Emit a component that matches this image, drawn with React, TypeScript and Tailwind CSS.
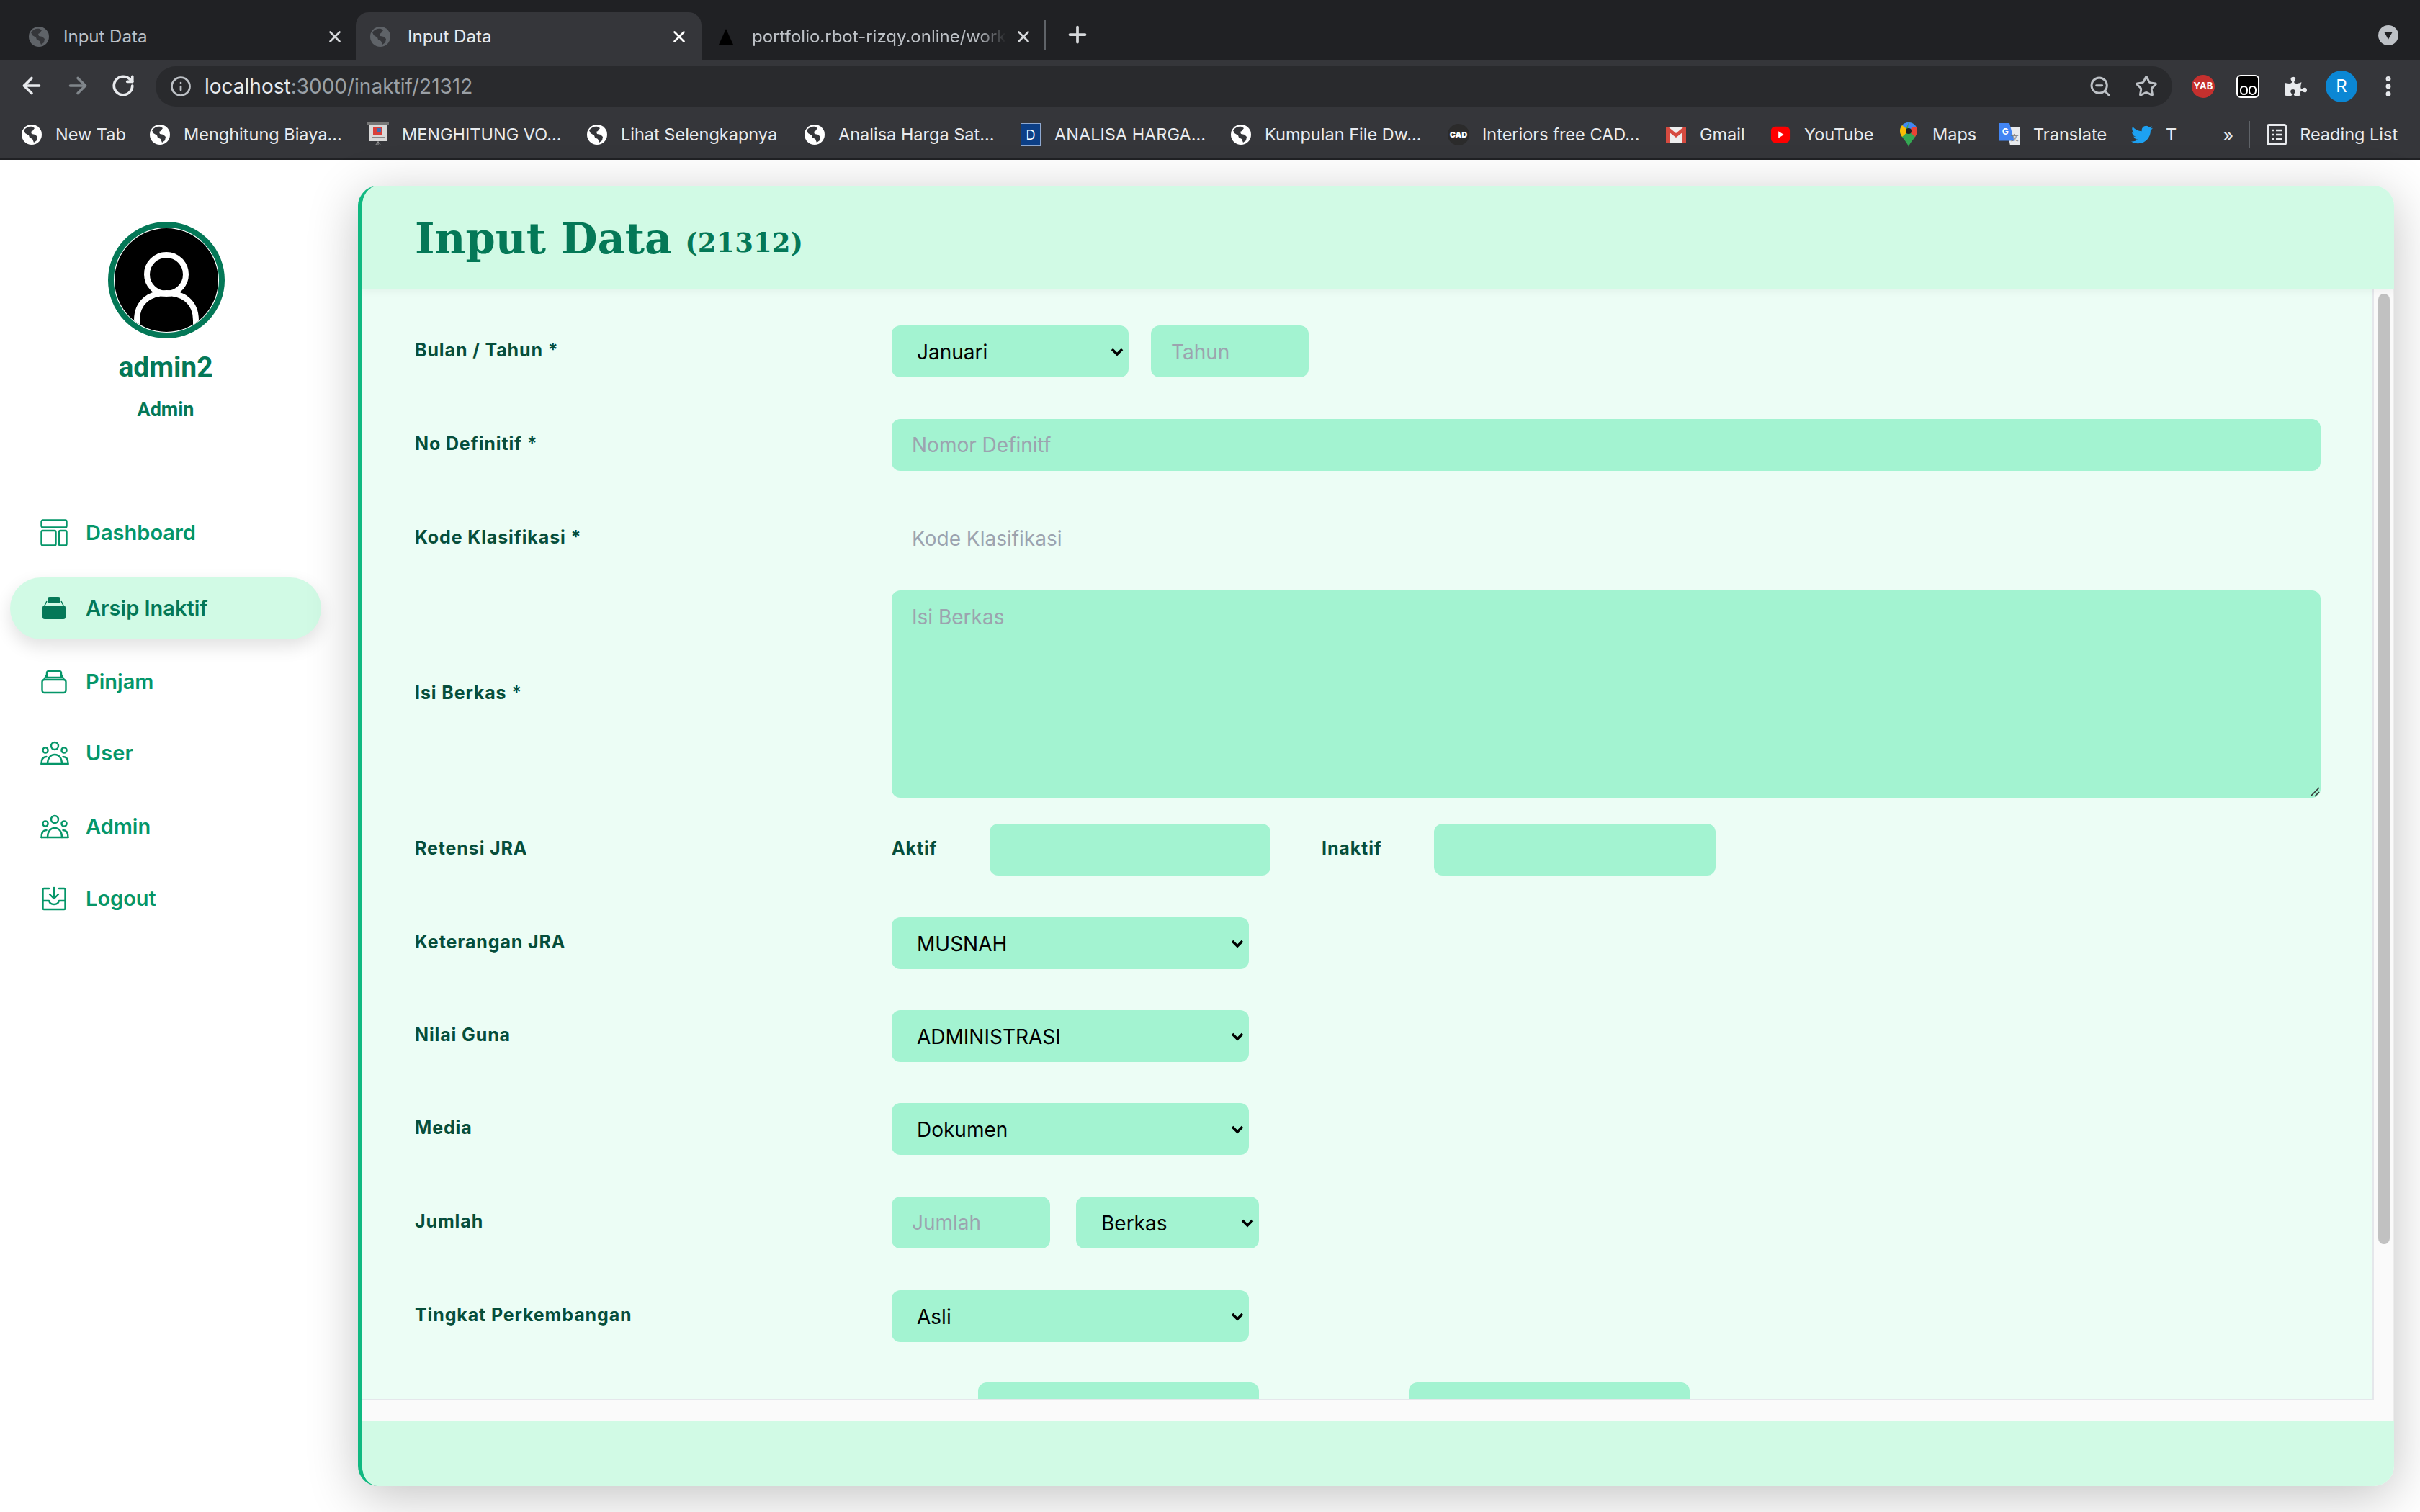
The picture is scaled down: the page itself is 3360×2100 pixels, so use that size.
import { ArrowLeft, ArrowRight, RotateCw, Info, ZoomOut, Star, MoreVertical, Plus, X } from "lucide-react";
import { FaTwitter, FaPuzzlePiece } from "react-icons/fa";
import type { ReactNode } from "react";

function Globe({ className = "text-white" }: { className?: string }) {
  return (
    <svg viewBox="0 0 28 28" className={`w-[28px] h-[28px] shrink-0 ${className}`}>
      <circle cx="14" cy="14" r="14" fill="currentColor" />
      <path d="M3 8c3-4 7-6 12-5l3 2-3 4-2 1 1 3 5 1 3 3-1 5-4 3-2-5-4-2-1-3-5-3z" fill="#35363a" />
    </svg>
  );
}

function Tab({ title, active, icon, width, textClass, textGap }: { title: string; active?: boolean; icon: ReactNode; width: string; textClass: string; textGap: string }) {
  return (
    <div className={`${width} h-[67px] flex items-center pl-[20px] rounded-t-[18px] ${active ? "bg-[#35363a]" : ""}`}>
      {icon}
      <span className={`${textGap} text-[24px] whitespace-nowrap overflow-hidden flex-1 ${textClass}`}>{title}</span>
      <X className={`w-[26px] h-[26px] shrink-0 ${active ? "text-white" : "text-[#d5d7da]"}`} strokeWidth={2.5} />
    </div>
  );
}

function Bm({ icon, label, w }: { icon: ReactNode; label: string; w: string }) {
  return (
    <div className={`flex items-center gap-[18px] shrink-0 ${w}`}>
      <span className="w-[30px] h-[30px] flex items-center justify-center shrink-0">{icon}</span>
      <span className="text-[23.5px] text-[#e8eaed] whitespace-nowrap">{label}</span>
    </div>
  );
}

function Chrome() {
  return (
    <div className="h-[222px] bg-[#35363a] border-b-2 border-[#202124] font-['Inter',sans-serif]">
      <div className="h-[84px] bg-[#202124] flex items-end relative pl-[20px]">
        <Tab width="w-[474px] pr-[16px]" textGap="ml-[20px]" title="Input Data" textClass="text-[#bdc1c6]" icon={<Globe className="text-[#5f6368]" />} />
        <Tab width="w-[480px] pr-[18px]" textGap="ml-[24px]" title="Input Data" active textClass="text-[#e8eaed]" icon={<Globe className="text-[#5f6368]" />} />
        <Tab width="w-[468px] pr-[8px]" textGap="ml-[22px] [mask-image:linear-gradient(to_right,black_86%,transparent_97%)]" title="portfolio.rbot-rizqy.online/work" textClass="text-[#bdc1c6]" icon={<svg viewBox="0 0 28 28" className="w-[28px] h-[28px]"><path d="M14 3 24 25H4z" fill="#000" /></svg>} />
        <div className="w-[2px] h-[42px] bg-[#5f6368] mb-[14px] ml-[8px]" />
        <Plus className="w-[36px] h-[36px] text-[#d5d7da] mb-[18px] ml-[26px]" strokeWidth={2.5} />
        <div className="ml-auto mr-[30px] mb-[21px] w-[28px] h-[28px] rounded-full bg-[#bdc1c6] flex items-center justify-center">
          <svg viewBox="0 0 12 12" className="w-[14px] h-[14px]"><path d="M1 2h10L6 11z" fill="#202124" /></svg>
        </div>
      </div>
      <div className="h-[64px] flex items-end">
        <div className="w-[216px] h-[56px] flex items-center pl-[26px] gap-[28px] text-[#e8eaed] pb-[2px]">
          <ArrowLeft className="w-[36px] h-[36px]" strokeWidth={2.4} />
          <ArrowRight className="w-[36px] h-[36px] text-[#80868b]" strokeWidth={2.4} />
          <RotateCw className="w-[34px] h-[34px]" strokeWidth={2.6} />
        </div>
        <div className="w-[2800px] h-[56px] rounded-full bg-[#292a2d] flex items-center pl-[20px] pr-[20px]">
          <Info className="w-[30px] h-[30px] text-[#bdc1c6]" strokeWidth={2.2} />
          <span className="ml-[18px] text-[28px] text-[#e8eaed]">localhost<span className="text-[#9aa0a6]">:3000/inaktif/21312</span></span>
          <ZoomOut className="ml-auto w-[32px] h-[32px] text-[#bdc1c6]" strokeWidth={2.2} />
          <Star className="ml-[32px] w-[32px] h-[32px] text-[#bdc1c6]" strokeWidth={2.2} />
        </div>
        <div className="flex-1 h-[56px] flex items-center pl-[27px] gap-[30px]">
          <div className="w-[32px] h-[32px] rounded-full bg-[#c5302e] flex items-center justify-center text-[13px] font-bold text-white">YAB</div>
          <div className="w-[32px] h-[32px] rounded-[6px] bg-black border-2 border-white flex items-end justify-center gap-[1px] pb-[2px]">
            <span className="w-[11px] h-[13px] rounded-full border-2 border-white" />
            <span className="w-[11px] h-[13px] rounded-full border-2 border-white" />
          </div>
          <FaPuzzlePiece className="w-[30px] h-[30px] text-[#e8eaed] ml-[6px]" />
          <div className="w-[44px] h-[44px] rounded-full bg-[#0b87d4] text-white text-[24px] flex items-center justify-center -ml-[4px]">R</div>
          <MoreVertical className="w-[36px] h-[36px] text-[#e8eaed] -ml-[5px]" strokeWidth={2.6} />
        </div>
      </div>
      <div className="h-[72px] flex items-center pl-[29px] gap-[34px] pt-[6px]">
        <Bm w="w-[144px]" icon={<Globe />} label="New Tab" />
        <Bm w="w-[269px]" icon={<Globe />} label="Menghitung Biaya..." />
        <Bm w="w-[270px]" icon={<svg viewBox="0 0 30 34" className="w-[30px] h-[34px]"><rect x="2" y="2" width="26" height="24" fill="#d9d9d9" /><rect x="0" y="0" width="30" height="3" fill="#777" /><rect x="8" y="6" width="13" height="11" fill="#d9403a" /><rect x="13" y="8" width="6" height="6" fill="#3f6fb5" /><rect x="6" y="20" width="18" height="2" fill="#888" /><path d="M15 26v6M11 32l4-5 4 5" stroke="#999" fill="none" /></svg>} label="MENGHITUNG VO..." />
        <Bm w="w-[268px]" icon={<Globe />} label="Lihat Selengkapnya" />
        <Bm w="w-[266px]" icon={<Globe />} label="Analisa Harga Sat..." />
        <Bm w="w-[258px]" icon={<div className="w-[28px] h-[32px] bg-[#0c3f86] border border-[#8fa9d0] text-white text-[18px] flex items-center justify-center">D</div>} label="ANALISA HARGA..." />
        <Bm w="w-[268px]" icon={<Globe />} label="Kumpulan File Dw..." />
        <Bm w="w-[268px]" icon={<div className="w-[30px] h-[30px] rounded-full bg-[#2b2b2b] text-white text-[11px] font-black flex items-center justify-center">CAD</div>} label="Interiors free CAD..." />
        <Bm w="w-[111px]" icon={<svg viewBox="0 0 30 30" className="w-[30px] h-[30px]"><rect x="1" y="4" width="28" height="22" fill="#eee" /><path d="M1 4v22h5V12l9 7 9-7v14h5V4h-3L15 13 4 4z" fill="#d64b40" /></svg>} label="Gmail" />
        <Bm w="w-[144px]" icon={<svg viewBox="0 0 30 30" className="w-[28px] h-[28px]"><rect x="1" y="3" width="28" height="24" rx="6" fill="#f00" /><path d="M12 10l8 5-8 5z" fill="#fff" /></svg>} label="YouTube" />
        <Bm w="w-[106px]" icon={<svg viewBox="0 0 24 34" className="w-[24px] h-[34px]"><path d="M12 0C5 0 0 5 0 12c0 8 9 13 12 22 3-9 12-14 12-22C24 5 19 0 12 0z" fill="#34a853" /><path d="M12 0C8 0 5 2 3 4l5 6 4-10z" fill="#4285f4" /><path d="M12 0l-1 8 6 4 6-5c-2-4-6-7-11-7z" fill="#4285f4" /><path d="M0 12c0 3 1 5 3 8l9-8-4-4-5-4C1 6 0 9 0 12z" fill="#fbbc04" /><path d="M17 7l6-1c1 2 1 4 1 6 0 2-1 5-3 8l-9-8z" fill="#ea4335" /><circle cx="12" cy="12" r="4" fill="#202124" /></svg>} label="Maps" />
        <Bm w="w-[150px]" icon={<svg viewBox="0 0 32 34" className="w-[32px] h-[34px]"><path d="M12 6h19v27H17z" fill="#e8eaed" /><path d="M1 0h15l7 26H1z" fill="#4285f4" /><text x="5" y="17" fontSize="13" fontWeight="700" fill="#fff" fontFamily="Inter">G</text><text x="18" y="26" fontSize="12" fill="#777" fontFamily="Inter">文</text></svg>} label="Translate" />
        <Bm w="w-[60px]" icon={<FaTwitter className="w-[30px] h-[30px] text-[#1da1f2]" />} label="T" />
        <span className="text-[26px] text-[#e8eaed] ml-[33px] -mr-[13px]">»</span>
        <div className="w-[2px] h-[38px] bg-[#5f6368]" />
        <div className="flex items-center gap-[18px] -ml-[11px]">
          <svg viewBox="0 0 28 30" className="w-[28px] h-[30px]"><rect x="1.5" y="1.5" width="25" height="27" rx="2" fill="none" stroke="#e8eaed" strokeWidth="3" /><path d="M7 9h3M13 9h8M7 15h3M13 15h8M7 21h3M13 21h8" stroke="#e8eaed" strokeWidth="2.5" /></svg>
          <span className="text-[23.5px] text-[#e8eaed] whitespace-nowrap">Reading List</span>
        </div>
      </div>
    </div>
  );
}

const S = { fill: "none", stroke: "currentColor", strokeWidth: 2.4, strokeLinecap: "round" as const, strokeLinejoin: "round" as const };

function DashIcon() {
  return (
    <svg viewBox="0 0 38 38" className="w-[38px] h-[38px]" {...S}>
      <rect x="1.5" y="1.5" width="35" height="10" rx="2" />
      <rect x="1.5" y="16" width="20" height="20.5" rx="2" />
      <rect x="26" y="16" width="10.5" height="20.5" rx="2" />
    </svg>
  );
}
function BoxIcon({ solid }: { solid?: boolean }) {
  if (solid)
    return (
      <svg viewBox="0 0 38 38" className="w-[38px] h-[38px]">
        <path d="M10 6c0-2 1-3 3-3h12c2 0 3 1 3 3v6H10z" fill="currentColor" />
        <path d="M9 9l-4 8M29 9l4 8" stroke="currentColor" strokeWidth="1.5" fill="none" />
        <rect x="3" y="15" width="32" height="19" rx="3" fill="currentColor" />
      </svg>
    );
  return (
    <svg viewBox="0 0 38 38" className="w-[38px] h-[38px]" {...S}>
      <path d="M9 13V7c0-2 1-3 3-3h14c2 0 3 1 3 3v6" />
      <path d="M9 9l-4 7M29 9l4 7M7 13h24" />
      <rect x="2.5" y="16" width="33" height="18" rx="3" />
    </svg>
  );
}
function UsersIcon() {
  return (
    <svg viewBox="0 0 40 34" className="w-[40px] h-[34px]" {...S}>
      <circle cx="20" cy="7" r="5" />
      <circle cx="7" cy="13" r="3.6" />
      <circle cx="33" cy="13" r="3.6" />
      <path d="M10 32c0-8 4-13 10-13s10 5 10 13" />
      <path d="M1.5 32c0-6 2-10 7-10M38.5 32c0-6-2-10-7-10" />
      <path d="M1.5 32h37" />
    </svg>
  );
}
function LogoutIcon() {
  return (
    <svg viewBox="0 0 34 34" className="w-[34px] h-[34px] ml-[2px]" {...S}>
      <path d="M10 3H3a1.500 1.500 0 0 0-1.500 1.500v26A1.500 1.500 0 0 0 3 32h28a1.500 1.500 0 0 0 1.500-1.500v-26A1.500 1.500 0 0 0 31 3h-7" />
      <path d="M17 2v14M11 11l6 6 6-6" />
      <path d="M2 20h8c1 4 4 5 7 5s6-1 7-5h8" />
    </svg>
  );
}

function NavItem({ icon, label, active, cls }: { icon: ReactNode; label: string; active?: boolean; cls: string }) {
  return (
    <div className={`mx-[14px] w-[432px] h-[86px] flex items-center rounded-full ${cls} ${active ? "bg-[#d1fae5] text-[#047857] shadow-[0_10px_24px_rgba(0,0,0,0.12)]" : "text-[#059669]"}`}>
      <span className="w-[105px] pl-[42px] flex items-center">{icon}</span>
      <span className="text-[29px] font-semibold">{label}</span>
    </div>
  );
}

function Sidebar() {
  return (
    <div className="w-[460px] shrink-0 flex flex-col font-['Inter',sans-serif]">
      <div className="mt-[86px] mx-auto ml-[150px] w-[162px] h-[162px] rounded-full border-[8px] border-[#047857] bg-white p-[1px] overflow-hidden">
        <svg viewBox="0 0 144 144" className="w-full h-full rounded-full bg-black">
          <circle cx="72" cy="64" r="27" fill="none" stroke="#fff" strokeWidth="8" />
          <path d="M31 146v-18c0-26 18-38 41-38s41 12 41 38v18" fill="none" stroke="#fff" strokeWidth="8" />
        </svg>
      </div>
      <div className="mt-[17px] text-center font-['Roboto',sans-serif] font-bold text-[39px] leading-[46px] text-[#047857]">admin2</div>
      <div className="mt-[20px] text-center font-['Roboto',sans-serif] font-bold text-[27px] leading-[32px] text-[#047857]">Admin</div>
      <div className="mt-[112px] flex flex-col">
        <NavItem cls="" icon={<DashIcon />} label="Dashboard" />
        <NavItem cls="mt-[19px]" active icon={<BoxIcon solid />} label="Arsip Inaktif" />
        <NavItem cls="mt-[16px]" icon={<BoxIcon />} label="Pinjam" />
        <NavItem cls="mt-[13px]" icon={<UsersIcon />} label="User" />
        <NavItem cls="mt-[16px]" icon={<UsersIcon />} label="Admin" />
        <NavItem cls="mt-[14px]" icon={<LogoutIcon />} label="Logout" />
      </div>
    </div>
  );
}

const field = "h-[72px] bg-[#a3f3d1] rounded-[12px] text-[28px] outline-none placeholder:text-[#9ca3af] text-black";
const inp = `${field} px-[28px]`;
const lbl = "text-[25px] font-bold tracking-[0.035em] text-[#064e3b] pb-[2px]";

function Row({ label, children, cls = "mb-[58px]" }: { label?: string; children: ReactNode; cls?: string }) {
  return (
    <div className={`flex items-center shrink-0 ${cls}`}>
      <div className={`w-[662px] shrink-0 whitespace-nowrap ${lbl}`}>{label}</div>
      {children}
    </div>
  );
}

function Opt({ v, w }: { v: string; w: string }) {
  return (
    <div className={`relative ${w}`}>
      <select defaultValue={v} className={`${field} w-full pl-[35px] pr-[30px] pt-[2px] appearance-none`}>
        <option>{v}</option>
      </select>
      <svg viewBox="0 0 18 12" className="absolute right-[7px] top-[31px] w-[18px] h-[12px] pointer-events-none">
        <path d="M2 2l7 7 7-7" fill="none" stroke="#000" strokeWidth="3.6" />
      </svg>
    </div>
  );
}

function Card() {
  return (
    <div className="w-[2827px] h-[1806px] mt-[36px] ml-[37px] rounded-[28px] border-l-[6px] border-[#10b981] shadow-[0_14px_70px_rgba(0,0,0,0.24)] flex flex-col overflow-hidden font-['Inter',sans-serif] bg-[#fafafa]">
      <div className="h-[144px] shrink-0 bg-[#d1fae5] flex items-center pl-[73px] pt-[2px] relative shadow-[0_4px_10px_rgba(0,0,0,0.04)] font-['DejaVu_Serif',serif] font-bold text-[#047857]">
        <span className="text-[59px] leading-none">Input Data</span>
        <span className="text-[37px] leading-none ml-[18px] mt-[12px]">(21312)</span>
      </div>
      <div className="flex-1 min-h-0 flex border-r-2 border-[#ececec]">
        <div className="flex-1 min-w-0 flex flex-col">
          <div className="flex-1 min-h-0 overflow-hidden bg-[#ecfdf5] border-r-2 border-b-2 border-[#e5e7eb] pl-[73px] pt-[50px] flex flex-col">
            <Row label="Bulan / Tahun *">
              <Opt v="Januari" w="w-[329px]" />
              <input placeholder="Tahun" className={`${inp} w-[219px] ml-[31px] pt-[2px]`} />
            </Row>
            <Row label="No Definitif *">
              <input placeholder="Nomor Definitf" className={`${inp} w-[1984px]`} />
            </Row>
            <Row label="Kode Klasifikasi *" cls="mb-[36px]">
              <input placeholder="Kode Klasifikasi" className={`${field} px-[28px] w-[1984px] !bg-transparent`} />
            </Row>
            <Row label="Isi Berkas *" cls="mb-[36px]">
              <div className="relative">
                <textarea placeholder="Isi Berkas" className="w-[1984px] h-[288px] bg-[#a3f3d1] rounded-[12px] text-[28px] px-[28px] py-[16px] outline-none placeholder:text-[#9ca3af] block resize-none" />
                <svg viewBox="0 0 16 16" className="absolute right-[1px] bottom-[1px] w-[16px] h-[16px] pointer-events-none">
                  <path d="M15 3L3 15M15 9l-6 6" stroke="#333" strokeWidth="1.6" fill="none" />
                </svg>
              </div>
            </Row>
            <Row label="Retensi JRA">
              <div className={`w-[136px] ${lbl}`}>Aktif</div>
              <input className={`${inp} w-[390px]`} />
              <div className={`w-[156px] ml-[71px] ${lbl}`}>Inaktif</div>
              <input className={`${inp} w-[391px]`} />
            </Row>
            <Row label="Keterangan JRA" cls="mb-[57px]"><Opt v="MUSNAH" w="w-[496px]" /></Row>
            <Row label="Nilai Guna" cls="mb-[57px]"><Opt v="ADMINISTRASI" w="w-[496px]" /></Row>
            <Row label="Media"><Opt v="Dokumen" w="w-[496px]" /></Row>
            <Row label="Jumlah">
              <input placeholder="Jumlah" className={`${inp} w-[220px]`} />
              <Opt v="Berkas" w="w-[254px] ml-[36px]" />
            </Row>
            <Row label="Tingkat Perkembangan" cls="mb-[56px]"><Opt v="Asli" w="w-[496px]" /></Row>
            <div className="flex shrink-0 pl-[662px]">
              <input className={`${inp} w-[390px] ml-[120px]`} />
              <input className={`${inp} w-[390px] ml-[208px]`} />
            </div>
          </div>
          <div className="h-[28px] shrink-0" />
        </div>
        <div className="w-[26px] shrink-0 pt-[6px] pl-[6px]">
          <div className="w-[16px] h-[1320px] rounded-full bg-[#c1c1c1]" />
        </div>
      </div>
      <div className="h-[91px] shrink-0 bg-[#d1fae5]" />
    </div>
  );
}

export default function App() {
  return (
    <div className="w-[3360px] h-[2100px] overflow-hidden bg-white flex flex-col">
      <Chrome />
      <div className="flex-1 min-h-0 flex">
        <Sidebar />
        <Card />
      </div>
    </div>
  );
}
